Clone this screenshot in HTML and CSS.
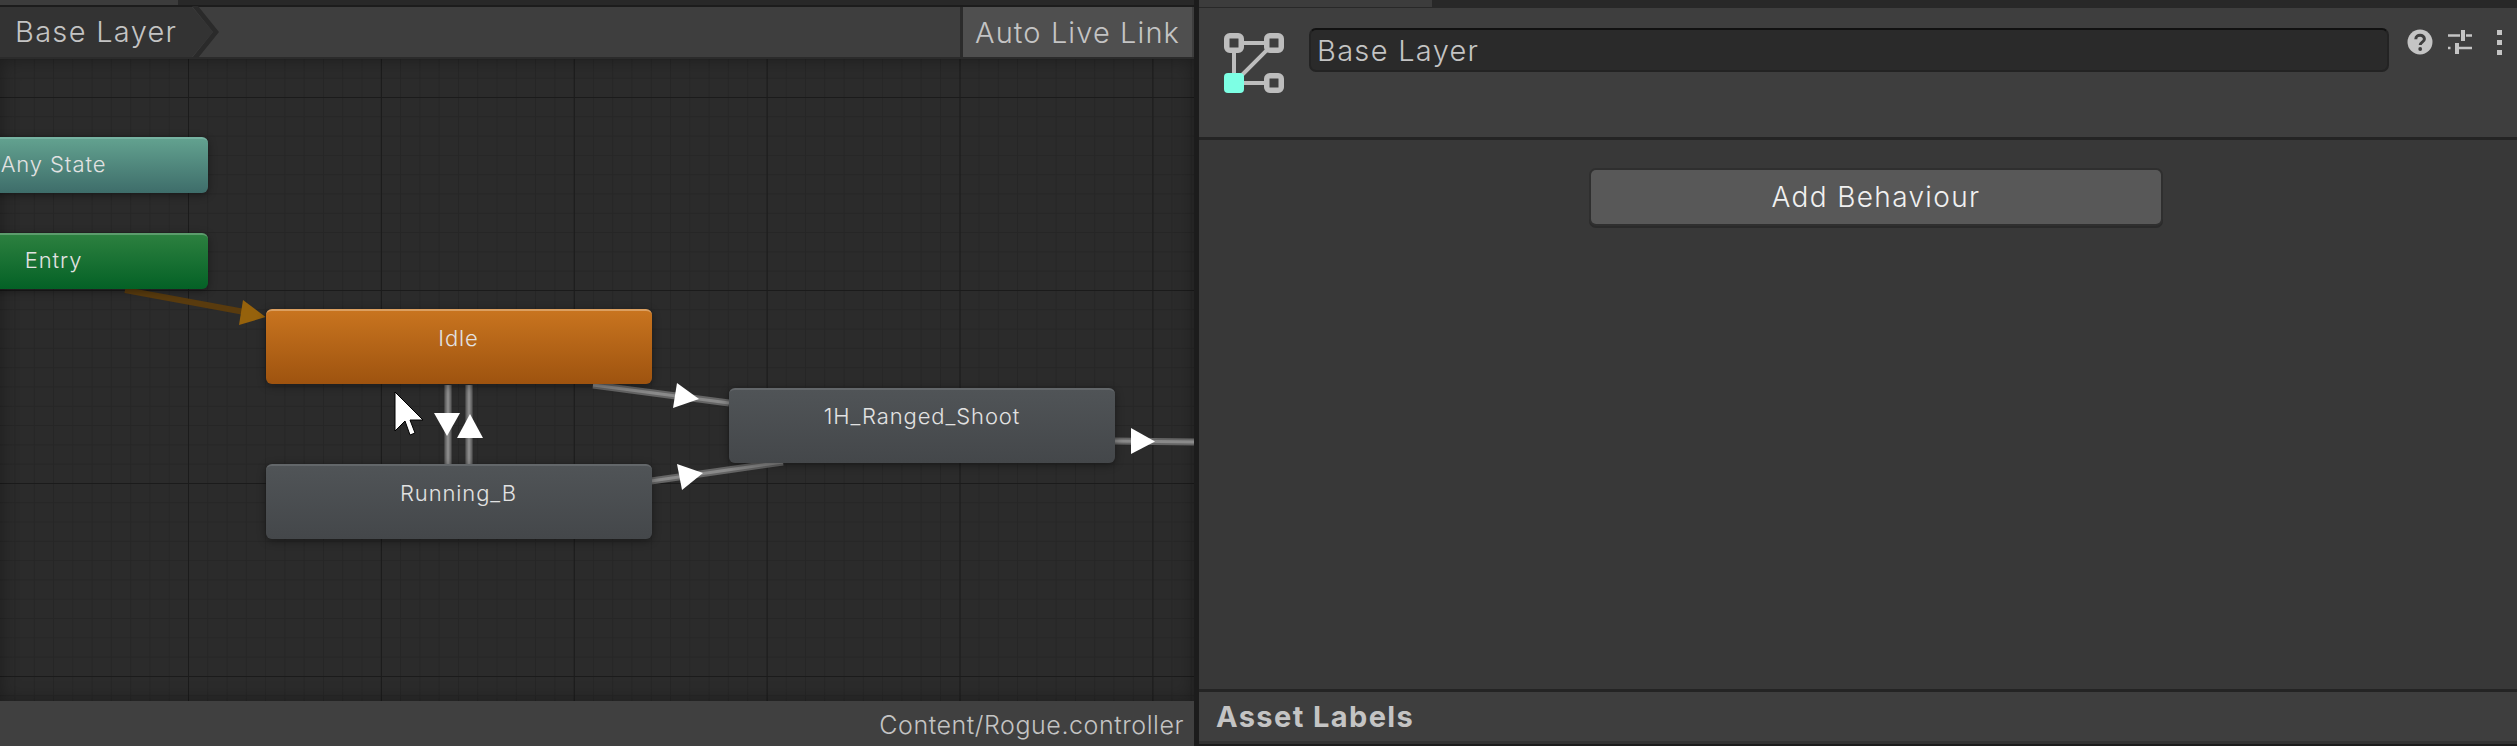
FILE: index.html
```html
<!DOCTYPE html>
<html lang="en">
<head>
    <meta charset="UTF-8">
    <title>Animator - Base Layer</title>
    <link rel="stylesheet" href="styles.css">
</head>
<body>
    <div class="editor">
        <section class="animator">
            <div class="strip"><span class="strip-tab"></span></div>
            <div class="crumbs">
                <div class="crumb">
                    Base Layer
                    <svg class="crumb-tip" viewBox="0 0 28 52" aria-hidden="true">
                        <path d="M0 0 L6 0 L27 26 L6 52 L0 52 L21 26 Z" fill="#2a2a2a"/>
                    </svg>
                </div>
                <button class="live-link">Auto Live Link</button>
            </div>
            <div class="graph">
                <svg class="wires" viewBox="0 59 1194 640" aria-hidden="true">
                    <path class="wire-brown" d="M125 290 L250 313"/>
                    <path class="arrow-brown" d="M265.6 317 L243 300 L239 325 Z"/>
                    <path class="wire" d="M593 385 L729 403"/>
                    <path class="wire-core" d="M593 385 L729 403"/>
                    <path class="wire" d="M651 481 L783 462"/>
                    <path class="wire-core" d="M651 481 L783 462"/>
                    <path class="wire" d="M448 385 L448 464"/>
                    <path class="wire-core" d="M448 385 L448 464"/>
                    <path class="wire" d="M469 385 L469 464"/>
                    <path class="wire-core" d="M469 385 L469 464"/>
                    <path class="wire" d="M1114 441 L1194 442"/>
                    <path class="wire-core" d="M1114 441 L1194 442"/>
                    <path class="arrow" d="M699 399 L677 383 L673 408 Z"/>
                    <path class="arrow" d="M703 473 L677 464 L682 490 Z"/>
                    <path class="arrow" d="M447 436 L434 413 L460 413 Z"/>
                    <path class="arrow" d="M470 414 L457 438 L483 438 Z"/>
                    <path class="arrow" d="M1155 441.5 L1131 428 L1131 454 Z"/>
                </svg>
                <div class="node node-any">Any State</div>
                <div class="node node-entry">Entry</div>
                <div class="node node-idle">Idle</div>
                <div class="node node-run">Running_B</div>
                <div class="node node-shoot">1H_Ranged_Shoot</div>
                <svg class="cursor" viewBox="0 0 32 48" aria-hidden="true">
                    <path d="M1 1 L1 40 L11 30 L16 44 L21 42 L16 29 L29 29 Z" fill="#fff" stroke="#000" stroke-width="1"/>
                </svg>
            </div>
            <div class="status">Content/Rogue.controller</div>
        </section>

        <section class="inspector">
            <div class="strip strip-right"><span class="strip-tab"></span></div>
            <header class="layer-head">
                <svg class="layer-icon" viewBox="0 0 60 60" aria-hidden="true">
                    <path d="M10 10 L50 10 M10 10 L10 50 M10 50 L50 10 M10 50 L50 50" stroke="#bdbdbd" stroke-width="4" fill="none"/>
                    <rect x="2.75" y="2.75" width="14.5" height="14.5" rx="3" fill="#3e3e3e" stroke="#bdbdbd" stroke-width="5.5"/>
                    <rect x="42.75" y="2.75" width="14.5" height="14.5" rx="3" fill="#3e3e3e" stroke="#bdbdbd" stroke-width="5.5"/>
                    <rect x="42.75" y="42.75" width="14.5" height="14.5" rx="3" fill="#3e3e3e" stroke="#bdbdbd" stroke-width="5.5"/>
                    <rect x="0" y="40" width="20" height="20" rx="4" fill="#7dffe4"/>
                </svg>
                <div class="layer-name">Base Layer</div>
                <div class="head-tools">
                    <svg class="tool-help" viewBox="0 0 26 26" aria-hidden="true">
                        <circle cx="13" cy="13" r="12.5" fill="#c4c4c4"/>
                        <path d="M8.8 10.2 C8.8 4.9 17.4 5.1 17.4 10 C17.4 13.2 13.2 13 13.2 16" stroke="#3e3e3e" stroke-width="3" fill="none"/>
                        <circle cx="13.2" cy="20" r="1.9" fill="#3e3e3e"/>
                    </svg>
                    <svg class="tool-sliders" viewBox="0 0 24 24" aria-hidden="true">
                        <path d="M0 5.5 H12 M18 5.5 H24 M0 18 H2.5 M11 18 H24" stroke="#c4c4c4" stroke-width="2.4"/>
                        <rect x="13" y="0" width="4" height="11" fill="#c4c4c4"/>
                        <rect x="7" y="13" width="4" height="11" fill="#c4c4c4"/>
                    </svg>
                    <div class="tool-more"><i></i><i></i><i></i></div>
                </div>
            </header>
            <div class="behaviours">
                <button class="add-btn">Add Behaviour</button>
            </div>
            <div class="labels">Asset Labels</div>
        </section>
    </div>
</body>
</html>
```

FILE: styles.css
```css
html, body {
    margin: 0;
    height: 100%;
}
body {
    background: #1c1c1c;
    font-family: "Inter", "Liberation Sans", sans-serif;
    font-weight: 300;
    color: #c4c4c4;
    overflow: hidden;
}
.editor {
    display: flex;
    width: 2517px;
    height: 746px;
    gap: 5px;
}

/* left side, the state machine */
.animator {
    width: 1194px;
    display: flex;
    flex-direction: column;
}
.strip {
    height: 5px;
    margin-bottom: 2px;
    background: #282828;
}
.strip-tab {
    display: block;
    width: 178px;
    height: 5px;
    background: #3c3c3c;
}
.crumbs {
    height: 50px;
    display: flex;
    justify-content: space-between;
    background: #3e3e3e;
    border-bottom: 2px solid #2b2b2b;
}
.crumb {
    position: relative;
    width: 192px;
    padding-left: 15px;
    box-sizing: border-box;
    line-height: 50px;
    font-size: 29px;
    letter-spacing: 1.3px;
    background: #333;
}
.crumb-tip {
    position: absolute;
    left: 192px;
    top: -1px;
    width: 28px;
    height: 52px;
}
.crumb::after {
    content: "";
    position: absolute;
    left: 192px;
    top: 0;
    width: 0;
    height: 0;
    border-left: 21px solid #333;
    border-top: 25px solid transparent;
    border-bottom: 25px solid transparent;
}
.live-link {
    width: 229px;
    margin-right: 2px;
    padding: 0;
    border: 0;
    border-left: 3px solid #2b2b2b;
    box-sizing: content-box;
    background: #4f4f4f;
    color: #c4c4c4;
    font: 300 29px "Inter", "Liberation Sans", sans-serif;
    letter-spacing: 1.1px;
}
.graph {
    position: relative;
    flex: 1;
    overflow: hidden;
    background-color: #2b2b2b;
    background-image:
        linear-gradient(#1b1b1b 1px, transparent 1px),
        linear-gradient(90deg, #1b1b1b 1px, transparent 1px),
        linear-gradient(#262626 1px, transparent 1px),
        linear-gradient(90deg, #262626 1px, transparent 1px);
    background-size: 193px 193px, 192.9px 193px, 19.3px 19.3px, 19.29px 19.3px;
    background-position: 0 38px, 188px 0, 0 38px, 188px 0;
    box-shadow: inset 0 0 18px rgba(0, 0, 0, 0.35);
}
.wires {
    position: absolute;
    left: 0;
    top: 0;
    width: 1194px;
    height: 640px;
}
.wire {
    stroke: #656565;
    stroke-width: 7;
    fill: none;
}
.wire-core {
    stroke: #8a8a8a;
    stroke-width: 3;
    fill: none;
}
.wire-brown {
    stroke: #593b0e;
    stroke-width: 6;
    fill: none;
}
.arrow {
    fill: #fff;
}
.arrow-brown {
    fill: #96620c;
}
.node {
    position: absolute;
    width: 386px;
    height: 75px;
    box-sizing: border-box;
    padding-top: 14px;
    border-radius: 6px;
    text-align: center;
    font-size: 22px;
    letter-spacing: 0.9px;
    line-height: 26px;
    color: #e2e2e2;
    background: linear-gradient(#505457, #44474a);
    border-top: 2px solid #63676a;
    box-shadow: 0 2px 8px rgba(0, 0, 0, 0.4);
}
.node-any, .node-entry {
    left: -101px;
    width: 309px;
    height: 56px;
    padding-top: 12px;
}
.node-any {
    top: 78px;
    background: linear-gradient(#62a18f, #3e6d6a);
    border-top-color: #77b3a2;
}
.node-entry {
    top: 174px;
    background: linear-gradient(#2c803f, #046126);
    border-top-color: #5c9c6c;
}
.node-idle {
    left: 265.5px;
    top: 250px;
    background: linear-gradient(#c8741f, #9e530f);
    border-top-color: #db9f60;
}
.node-run {
    left: 265.5px;
    top: 405px;
}
.node-shoot {
    left: 729px;
    top: 329px;
    padding-top: 13px;
}
.cursor {
    position: absolute;
    left: 394px;
    top: 332px;
    width: 32px;
    height: 48px;
}
.status {
    height: 45px;
    background: #404040;
    padding-right: 10px;
    text-align: right;
    line-height: 49px;
    font-size: 25px;
    letter-spacing: 0.55px;
}

/* right side, the inspector */
.inspector {
    flex: 1;
    display: flex;
    flex-direction: column;
    background: #383838;
    border-bottom: 2px solid #1c1c1c;
}
.strip-right {
    height: 7px;
    margin: 0;
    background: #282828;
}
.strip-right .strip-tab {
    width: 233px;
    height: 7px;
}
.layer-head {
    height: 133px;
    box-sizing: border-box;
    display: flex;
    align-items: flex-start;
    padding: 25px 0 0 25px;
    background: #3e3e3e;
    border-top: 1px solid #282828;
    border-bottom: 3px solid #242424;
}
.layer-icon {
    width: 60px;
    height: 60px;
    flex: none;
}
.layer-name {
    width: 1080px;
    height: 44px;
    margin: -5px 0 0 25px;
    box-sizing: border-box;
    padding-left: 6px;
    border: 2px solid #232323;
    border-top-color: #111;
    border-radius: 7px;
    background: #2a2a2a;
    line-height: 42px;
    font-size: 29px;
    letter-spacing: 1.3px;
}
.head-tools {
    display: flex;
    align-items: center;
    margin: -4px 0 0 18px;
    height: 26px;
}
.tool-help {
    width: 26px;
    height: 26px;
}
.tool-sliders {
    width: 24px;
    height: 24px;
    margin-left: 15px;
}
.tool-more {
    display: flex;
    flex-direction: column;
    gap: 5px;
    margin-left: 25px;
}
.tool-more i {
    display: block;
    width: 5px;
    height: 5px;
    background: #c4c4c4;
}
.behaviours {
    flex: 1;
    padding: 30px 0 0 36px;
    display: flex;
    justify-content: center;
    align-items: flex-start;
    border-bottom: 3px solid #242424;
}
.add-btn {
    width: 570px;
    height: 54px;
    box-sizing: border-box;
    border: 0;
    border-radius: 5px;
    background: #585858;
    box-shadow: 0 0 0 2px #2f2f2f, 0 2px 0 2px #2a2a2a;
    color: #f0f0f0;
    font: 300 28px "Inter", "Liberation Sans", sans-serif;
    letter-spacing: 1.35px;
}
.labels {
    height: 52px;
    box-sizing: border-box;
    padding-left: 17px;
    background: #3e3e3e;
    border-bottom: 3px solid #333;
    line-height: 50px;
    font-size: 29px;
    font-weight: 700;
    letter-spacing: 1.4px;
}
```
